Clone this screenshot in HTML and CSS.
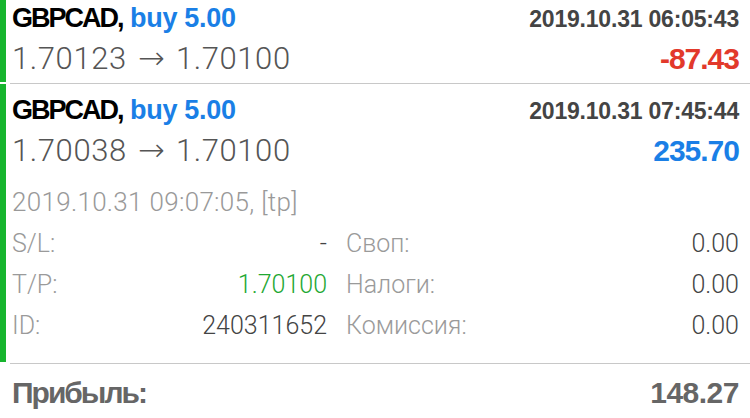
FILE: index.html
```html
<!DOCTYPE html>
<html lang="ru">
<head>
    <meta charset="UTF-8">
    <meta name="viewport" content="width=device-width, initial-scale=1.0">
    <title>Сделки</title>
    <link rel="stylesheet" href="styles.css">
</head>
<body>
    <div class="list">
        <div class="deal">
            <div class="mark"></div>
            <div class="body">
                <div class="row head">
                    <span class="sym"><span class="name">GBPCAD,</span> <span class="side">buy 5.00</span></span>
                    <span class="time">2019.10.31 06:05:43</span>
                </div>
                <div class="row prices">
                    <span class="price">1.70123 <span class="arrow">→</span> 1.70100</span>
                    <span class="profit loss">-87.43</span>
                </div>
            </div>
        </div>

        <div class="deal">
            <div class="mark"></div>
            <div class="body">
                <div class="row head">
                    <span class="sym"><span class="name">GBPCAD,</span> <span class="side">buy 5.00</span></span>
                    <span class="time">2019.10.31 07:45:44</span>
                </div>
                <div class="row prices">
                    <span class="price">1.70038 <span class="arrow">→</span> 1.70100</span>
                    <span class="profit gain">235.70</span>
                </div>
                <div class="closed">2019.10.31 09:07:05, [tp]</div>
                <div class="details">
                    <div class="pair"><span class="label">S/L:</span><span class="value">-</span></div>
                    <div class="pair"><span class="label">Своп:</span><span class="value">0.00</span></div>
                    <div class="pair"><span class="label">T/P:</span><span class="value tp">1.70100</span></div>
                    <div class="pair"><span class="label">Налоги:</span><span class="value">0.00</span></div>
                    <div class="pair"><span class="label">ID:</span><span class="value">240311652</span></div>
                    <div class="pair"><span class="label">Комиссия:</span><span class="value">0.00</span></div>
                </div>
            </div>
        </div>

        <div class="total">
            <span class="total-label">Прибыль:</span>
            <span class="total-value">148.27</span>
        </div>
    </div>
</body>
</html>
```

FILE: styles.css
```css
* { margin: 0; padding: 0; box-sizing: border-box; }
body { background: #fff; font-family: Roboto, "Liberation Sans", sans-serif; overflow: hidden; }
.list { margin-top: -8px; }
.deal { display: flex; }
.mark { width: 6px; background: #17b52e; margin-bottom: 2px; }
.body { flex: 1; margin-left: 4px; padding: 8px 11px 4px 2px; border-bottom: 1px solid #c8c8c8; }
.row { display: flex; justify-content: space-between; align-items: baseline; }
.head { line-height: 36px; }
.sym { font-family: "Liberation Sans", sans-serif; font-weight: bold; font-size: 27px; color: #000; }
.name { letter-spacing: -2px; }
.side { color: #1a7fe6; letter-spacing: -0.3px; }
.time { font-family: "Liberation Sans", sans-serif; font-weight: bold; font-size: 23px; color: #444; letter-spacing: -0.2px; }
.prices { line-height: 40px; margin-top: 2px; }
.price { font-size: 31px; font-weight: 300; color: #555; letter-spacing: 0.6px; }
.arrow { font-family: "DejaVu Sans", sans-serif; font-weight: 200; font-size: 32px; line-height: 20px; margin: 0 3px; letter-spacing: 0; }
.profit { font-family: "Liberation Sans", sans-serif; font-weight: bold; font-size: 30px; letter-spacing: -1px; }
.loss { color: #e2392b; }
.gain { color: #1a7fe6; }
.closed { margin-top: 16px; font-size: 26px; line-height: 30px; font-weight: 300; color: #999; letter-spacing: 0.3px; }
.details { display: grid; grid-template-columns: 315px 1fr; column-gap: 19px; margin-top: 6px; padding-bottom: 13px; }
.pair { display: flex; justify-content: space-between; line-height: 41px; font-size: 25px; font-weight: 300; }
.label { color: #9a9a9a; }
.value { color: #444; }
.value.tp { color: #1fa833; }
.total { display: flex; justify-content: space-between; align-items: baseline; padding: 11px 11px 0 12px; line-height: 36px; font-family: "Liberation Sans", sans-serif; font-weight: bold; color: #666; }
.total-label { font-size: 30px; letter-spacing: -2px; }
.total-value { font-size: 30px; letter-spacing: -0.5px; }
```
